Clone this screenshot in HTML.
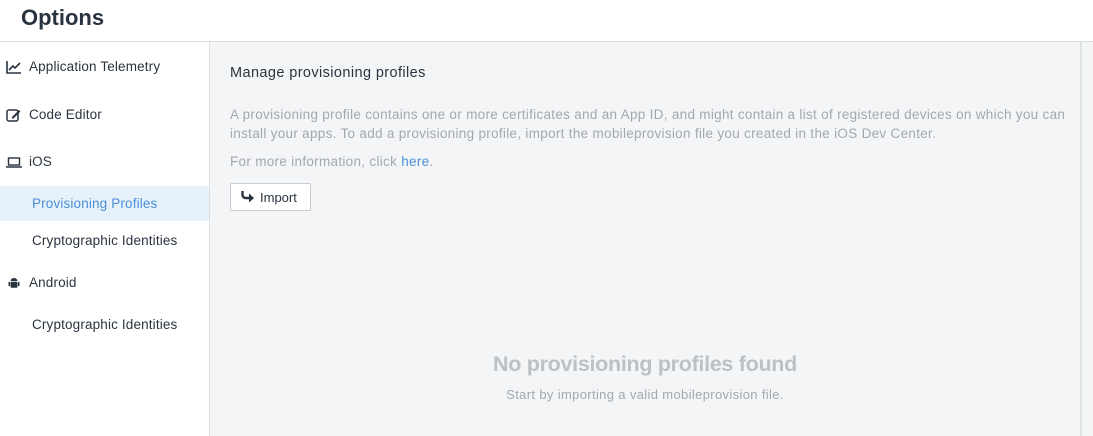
<!DOCTYPE html>
<html><head><style>
*{margin:0;padding:0;box-sizing:border-box}
body{width:1093px;height:436px;overflow:hidden;font-family:"Liberation Sans",sans-serif;background:#fff;position:relative}
.hdr{position:absolute;left:0;top:0;width:1093px;height:42px;border-bottom:1px solid #dcdfe0}
.hdr h1{position:absolute;left:21px;top:5px;font-size:22px;font-weight:bold;color:#2a3440}
.side{position:absolute;left:0;top:42px;width:210px;height:394px;border-right:1px solid #dcdfe0;background:#fff}
.it{position:absolute;font-size:13.5px;color:#2a3440;white-space:nowrap;letter-spacing:0.15px}
.it svg{position:absolute;left:-23px;top:1px}
.sel{position:absolute;left:0;top:144px;width:209px;height:35px;background:#e7f1fa}
.main{position:absolute;left:210px;top:42px;width:870px;height:394px;background:#f4f5f7}
.vline{position:absolute;left:1080px;top:42px;width:2px;height:394px;background:#dde3e3}
.rt{position:absolute;left:1082px;top:42px;width:11px;height:394px;background:#f4f5f7}
.t{position:absolute;white-space:nowrap}
</style></head><body>
<div class="hdr"><h1>Options</h1></div>
<div class="side">
<div class="sel"></div>
<div class="it" style="left:29px;top:17px"><svg width="16" height="14" viewBox="0 0 16 14"><path d="M1 1V13H15" stroke="#2a3440" stroke-width="1.6" fill="none"/><path d="M3 10L7 6L9 8L14 3" stroke="#2a3440" stroke-width="1.6" fill="none"/></svg>Application Telemetry</div>
<div class="it" style="left:29px;top:65px"><svg width="16" height="14" viewBox="0 0 16 14"><rect x="1" y="2" width="11" height="11" rx="2" stroke="#2a3440" stroke-width="1.5" fill="none"/><path d="M6 9L13 2L14.5 3.5L7.5 10.5H6Z" fill="#2a3440"/></svg>Code Editor</div>
<div class="it" style="left:29px;top:112px"><svg width="16" height="14" viewBox="0 0 16 14"><rect x="2.5" y="3" width="11" height="7" stroke="#2a3440" stroke-width="1.4" fill="none"/><path d="M0 12H16" stroke="#2a3440" stroke-width="1.5"/></svg>iOS</div>
<div class="it" style="left:32px;top:154px;color:#4a90d9">Provisioning Profiles</div>
<div class="it" style="left:32px;top:191px">Cryptographic Identities</div>
<div class="it" style="left:29px;top:233px"><svg width="16" height="14" viewBox="0 0 16 14"><path d="M4.5 5A3.5 3 0 0 1 11.5 5Z" fill="#2a3440"/><rect x="4.5" y="5.7" width="7" height="6" rx="1" fill="#2a3440"/><rect x="2.5" y="5.7" width="1.5" height="4.5" rx=".7" fill="#2a3440"/><rect x="12" y="5.7" width="1.5" height="4.5" rx=".7" fill="#2a3440"/></svg>Android</div>
<div class="it" style="left:32px;top:275px">Cryptographic Identities</div>
</div>
<div class="main">
<div class="t" style="left:20px;top:23px;font-size:14.5px;letter-spacing:0.4px;color:#2a3440">Manage provisioning profiles</div>
<div class="t" style="left:20px;top:63px;font-size:13.5px;line-height:19px;letter-spacing:0.3px;color:#a3a8ad">A provisioning profile contains one or more certificates and an App ID, and might contain a list of registered devices on which you can<br>install your apps. To add a provisioning profile, import the mobileprovision file you created in the iOS Dev Center.</div>
<div class="t" style="left:20px;top:112px;font-size:13.5px;letter-spacing:0.3px;color:#a3a8ad">For more information, click <span style="color:#4a90d9">here</span>.</div>
<div style="position:absolute;left:20px;top:141px;width:81px;height:28px;background:#fff;border:1px solid #c9cdd1;border-radius:2px;font-size:13px;color:#2a3440">
<svg style="position:absolute;left:10px;top:7px" width="14" height="12" viewBox="0 0 14 12"><path d="M1.5 0V4A3 3 0 0 0 4.5 7H9" stroke="#2a3440" stroke-width="2.4" fill="none"/><path d="M8 2.5L13 7L8 11.5Z" fill="#2a3440"/></svg>
<span style="position:absolute;left:29px;top:6px">Import</span></div>
<div class="t" style="left:0;width:870px;text-align:center;top:310px;font-size:21.5px;font-weight:bold;color:#bcc1c5;letter-spacing:-0.3px">No provisioning profiles found</div>
<div class="t" style="left:0;width:870px;text-align:center;top:345px;font-size:13px;letter-spacing:0.35px;color:#a3a8ad">Start by importing a valid mobileprovision file.</div>
</div>
<div class="vline"></div><div class="rt"></div>
</body></html>
